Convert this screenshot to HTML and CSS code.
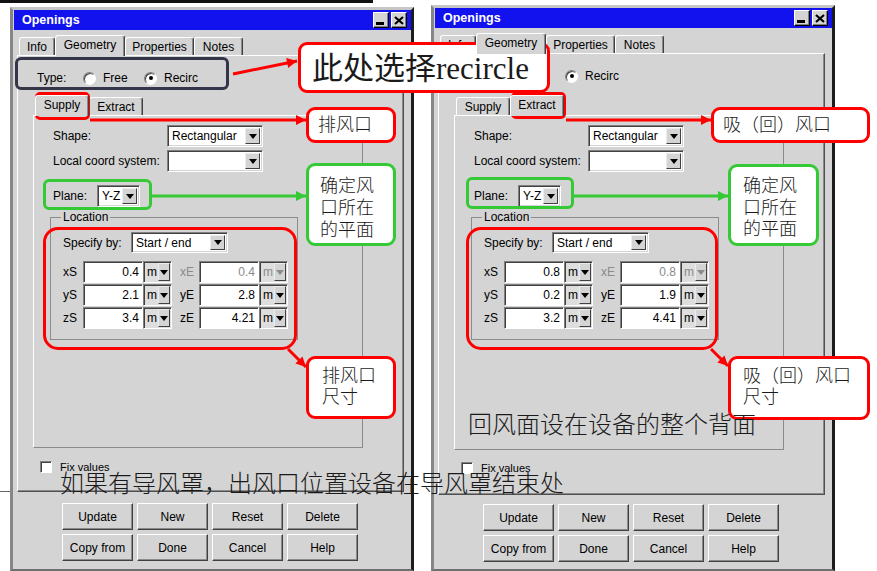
FILE: index.html
```html
<!DOCTYPE html>
<html lang="zh">
<head>
<meta charset="utf-8">
<title>Openings</title>
<link rel="stylesheet" href="styles.css">
</head>
<body>
<div class="desk">
  <div class="topline"></div>
  <div class="stray"></div>

  <section class="win win-a">
    <header class="title"><span>Openings</span><span class="tbtns"><span class="tb tb-min"></span><span class="tb"><svg width="10" height="9" viewBox="0 0 10 9"><path d="M1 1L9 8M9 1L1 8" stroke="#000" stroke-width="2.2"/></svg></span></span></header>
    <nav class="tabs">
      <span class="tab w-info">Info</span><span class="tab on w-geo">Geometry</span><span class="tab w-prop">Properties</span><span class="tab w-notes">Notes</span>
    </nav>
    <div class="panel">
      <div class="typerow"><span class="typelbl">Type:</span><span class="opt"><span class="radio"></span>Free</span><span class="opt"><span class="radio on"></span>Recirc</span></div>
      <nav class="tabs sub"><span class="tab w-sub on">Supply</span><span class="tab w-sub">Extract</span></nav>
      <div class="subpanel">
        <div class="frow"><span class="lbl-w">Shape:</span><span class="combo c-shape"><span class="val">Rectangular</span><span class="drop"></span></span></div>
        <div class="frow"><span class="lbl-w">Local coord system:</span><span class="combo c-shape"><span class="val"></span><span class="drop"></span></span></div>
        <div class="frow plane"><span class="lbl-p">Plane:</span><span class="combo c-plane"><span class="val">Y-Z</span><span class="drop"></span></span></div>
        <fieldset class="loc"><legend>Location</legend>
          <div class="srow"><span class="lbl-s">Specify by:</span><span class="combo c-spec"><span class="val">Start / end</span><span class="drop"></span></span></div>
          <div class="crow first"><span class="cl">xS</span><span class="inp">0.4</span><span class="unit"><span class="u">m</span><span class="drop"></span></span><span class="cl cl2 dis">xE</span><span class="inp dis">0.4</span><span class="unit dis"><span class="u">m</span><span class="drop"></span></span></div>
          <div class="crow"><span class="cl">yS</span><span class="inp">2.1</span><span class="unit"><span class="u">m</span><span class="drop"></span></span><span class="cl cl2">yE</span><span class="inp">2.8</span><span class="unit"><span class="u">m</span><span class="drop"></span></span></div>
          <div class="crow"><span class="cl">zS</span><span class="inp">3.4</span><span class="unit"><span class="u">m</span><span class="drop"></span></span><span class="cl cl2">zE</span><span class="inp">4.21</span><span class="unit"><span class="u">m</span><span class="drop"></span></span></div>
        </fieldset>
      </div>
      <div class="fix"><span class="chk"></span>Fix values</div>
    </div>
    <div class="btns">
      <span class="btn">Update</span><span class="btn">New</span><span class="btn">Reset</span><span class="btn">Delete</span>
      <span class="btn">Copy from</span><span class="btn">Done</span><span class="btn">Cancel</span><span class="btn">Help</span>
    </div>
  </section>

  <section class="win win-b">
    <header class="title"><span>Openings</span><span class="tbtns"><span class="tb tb-min"></span><span class="tb"><svg width="10" height="9" viewBox="0 0 10 9"><path d="M1 1L9 8M9 1L1 8" stroke="#000" stroke-width="2.2"/></svg></span></span></header>
    <nav class="tabs">
      <span class="tab w-info">Info</span><span class="tab on w-geo">Geometry</span><span class="tab w-prop">Properties</span><span class="tab w-notes">Notes</span>
    </nav>
    <div class="panel">
      <div class="typerow"><span class="typelbl">Type:</span><span class="opt"><span class="radio"></span>Free</span><span class="opt"><span class="radio on"></span>Recirc</span></div>
      <nav class="tabs sub"><span class="tab w-sub">Supply</span><span class="tab w-sub on">Extract</span></nav>
      <div class="subpanel">
        <div class="frow"><span class="lbl-w">Shape:</span><span class="combo c-shape"><span class="val">Rectangular</span><span class="drop"></span></span></div>
        <div class="frow"><span class="lbl-w">Local coord system:</span><span class="combo c-shape"><span class="val"></span><span class="drop"></span></span></div>
        <div class="frow plane"><span class="lbl-p">Plane:</span><span class="combo c-plane"><span class="val">Y-Z</span><span class="drop"></span></span></div>
        <fieldset class="loc"><legend>Location</legend>
          <div class="srow"><span class="lbl-s">Specify by:</span><span class="combo c-spec"><span class="val">Start / end</span><span class="drop"></span></span></div>
          <div class="crow first"><span class="cl">xS</span><span class="inp">0.8</span><span class="unit"><span class="u">m</span><span class="drop"></span></span><span class="cl cl2 dis">xE</span><span class="inp dis">0.8</span><span class="unit dis"><span class="u">m</span><span class="drop"></span></span></div>
          <div class="crow"><span class="cl">yS</span><span class="inp">0.2</span><span class="unit"><span class="u">m</span><span class="drop"></span></span><span class="cl cl2">yE</span><span class="inp">1.9</span><span class="unit"><span class="u">m</span><span class="drop"></span></span></div>
          <div class="crow"><span class="cl">zS</span><span class="inp">3.2</span><span class="unit"><span class="u">m</span><span class="drop"></span></span><span class="cl cl2">zE</span><span class="inp">4.41</span><span class="unit"><span class="u">m</span><span class="drop"></span></span></div>
        </fieldset>
      </div>
      <div class="fix"><span class="chk"></span>Fix values</div>
    </div>
    <div class="btns">
      <span class="btn">Update</span><span class="btn">New</span><span class="btn">Reset</span><span class="btn">Delete</span>
      <span class="btn">Copy from</span><span class="btn">Done</span><span class="btn">Cancel</span><span class="btn">Help</span>
    </div>
  </section>

  <div class="mark m-type"></div>
  <div class="mark red m-supply"></div>
  <div class="mark green m-plane"></div>
  <div class="mark red m-loc"></div>
  <div class="mark red m-extract"></div>
  <div class="mark green m-plane2"></div>
  <div class="mark red m-loc2"></div>

  <svg class="arrows" width="877" height="571" viewBox="0 0 877 571">
    <defs>
      <marker id="hr" viewBox="0 0 10 10" refX="10" refY="5" markerWidth="11" markerHeight="10" markerUnits="userSpaceOnUse" orient="auto"><path d="M0 0L10 5L0 10z" fill="#f00"/></marker>
      <marker id="hg" viewBox="0 0 10 10" refX="10" refY="5" markerWidth="11" markerHeight="10" markerUnits="userSpaceOnUse" orient="auto"><path d="M0 0L10 5L0 10z" fill="#36c936"/></marker>
    </defs>
    <g stroke-width="3" fill="none">
      <line x1="233" y1="74" x2="297" y2="61" stroke="#f00" marker-end="url(#hr)"/>
      <line x1="90" y1="120" x2="306" y2="120" stroke="#f00" marker-end="url(#hr)"/>
      <line x1="152" y1="196" x2="306" y2="196" stroke="#36c936" marker-end="url(#hg)"/>
      <line x1="288" y1="349" x2="306" y2="367" stroke="#f00" marker-end="url(#hr)"/>
      <line x1="566" y1="120" x2="711" y2="120" stroke="#f00" marker-end="url(#hr)"/>
      <line x1="574" y1="196" x2="728" y2="196" stroke="#36c936" marker-end="url(#hg)"/>
      <line x1="711" y1="349" x2="728" y2="366" stroke="#f00" marker-end="url(#hr)"/>
    </g>
  </svg>

  <div class="callout c1">此处选择recircle</div>
  <div class="callout c2">排风口</div>
  <div class="callout green c3">确定风<br>口所在<br>的平面</div>
  <div class="callout c4">排风口<br>尺寸</div>
  <div class="callout c5">吸（回）风口</div>
  <div class="callout green c6">确定风<br>口所在<br>的平面</div>
  <div class="callout c7">吸（回）风口<br>尺寸</div>

  <div class="note n1">回风面设在设备的整个背面</div>
  <div class="note n2">如果有导风罩，出风口位置设备在导风罩结束处</div>
</div>
</body>
</html>
```

FILE: styles.css
```css
* { box-sizing: border-box; margin: 0; padding: 0; }
body { margin: 0; background: #fff; font-family: "Liberation Sans", Arial, sans-serif; }

.desk { position: relative; width: 877px; height: 571px; overflow: hidden; background: #fff; }
.topline { position: absolute; left: 0; top: 0; width: 373px; height: 3px; background: #111; }
.stray { position: absolute; left: 0; top: 491px; width: 11px; height: 1px; background: #666; }

/* window */
.win {
  position: absolute; width: 404px; height: 564px;
  background: #d4d4d4; color: #000; font-size: 12px;
  border-style: solid; border-width: 3px 3px 2px 3px;
  border-color: #c6c6c6 #1c1c1c #6e6e6e #868686;
  padding-left: 1px;
}
.win-a { left: 10px; top: 7px; }
.win-b { left: 431px; top: 5px; height: 566px; }

.title {
  height: 20px; background: #1212ee; color: #fff;
  display: flex; align-items: center; justify-content: space-between;
  padding: 0 4px 0 8px; font-weight: bold; font-size: 12.5px;
}
.tbtns { display: flex; gap: 2px; }
.tb {
  width: 16px; height: 16px; background: #d4d4d4;
  border: 1px solid; border-color: #fff #000 #000 #fff;
  box-shadow: inset -1px -1px #808080;
  display: flex; align-items: center; justify-content: center;
}
.tb-min { align-items: flex-end; padding-bottom: 2px; padding-right: 2px; }
.tb-min::after { content: ""; width: 8px; height: 3px; background: #000; }

/* tabs */
.tabs { display: flex; align-items: flex-end; height: 22px; margin-top: 3px; padding-left: 5px; }
.tab {
  height: 18px; background: #d4d4d4;
  border: 1px solid; border-bottom: none;
  border-color: #fff #404040 transparent #fff;
  border-radius: 3px 3px 0 0;
  box-shadow: inset -1px 0 #8a8a8a;
  display: flex; align-items: center; justify-content: center;
  white-space: nowrap;
}
.tab.on { height: 21px; margin-bottom: -1px; position: relative; z-index: 1; padding-bottom: 3px; }
.w-info { width: 36px; }
.w-geo { width: 70px; }
.w-prop { width: 69px; }
.w-notes { width: 49px; }
.w-sub { width: 54px; }
.tabs.sub { height: 23px; margin-left: 17px; padding-left: 0; }
.win-b .tabs.sub { margin-top: 5px; }

.panel {
  margin-left: 3px; width: 387px; height: 437px;
  border: 1px solid; border-color: #fff #505050 #505050 #fff;
  box-shadow: inset -1px -1px #8a8a8a;
}
.win-b .panel { height: 442px; }

.typerow { display: flex; align-items: center; height: 22px; margin-top: 11px; padding-left: 19px; }
.typelbl { width: 46px; }
.opt { display: flex; align-items: center; width: 61px; }
.radio {
  width: 13px; height: 13px; border-radius: 50%; background: #fff;
  border: 1px solid; border-color: #808080 #fff #fff #808080;
  box-shadow: inset 1px 1px #404040;
  margin-right: 7px; display: flex; align-items: center; justify-content: center;
}
.radio.on::after { content: ""; width: 4px; height: 4px; border-radius: 50%; background: #000; }

.subpanel {
  margin-left: 15px; width: 330px; height: 333px;
  border: 1px solid; border-color: #fff #8a8a8a #8a8a8a #fff;
  padding: 9px 0 0 16px;
}
.win-b .subpanel { height: 335px; }

.frow { display: flex; align-items: center; height: 22px; padding-left: 3px; }
.frow + .frow { margin-top: 3px; }
.frow.plane { margin-top: 13px; }
.lbl-w { width: 114px; white-space: nowrap; }
.lbl-p { width: 44px; }
.lbl-s { width: 68px; white-space: nowrap; }

.combo {
  display: flex; height: 22px; background: #fff;
  border: 1px solid; border-color: #808080 #fff #fff #808080;
  box-shadow: inset 1px 1px #404040, inset -1px -1px #d4d4d4;
  padding: 2px;
}
.combo .val { flex: 1; padding-left: 2px; display: flex; align-items: center; white-space: nowrap; overflow: hidden; }
.c-shape { width: 96px; }
.c-plane { width: 43px; }
.c-spec { width: 97px; }

.drop {
  width: 15px; background: #d4d4d4;
  border: 1px solid; border-color: #ececec #404040 #404040 #ececec;
  display: flex; align-items: center; justify-content: center;
}
.drop::after { content: ""; border-left: 4px solid transparent; border-right: 4px solid transparent; border-top: 5px solid #000; }

.loc {
  margin-top: 3px; width: 248px; min-width: 0;
  border: 1px solid #8c8c8c;
  padding: 0 0 10px 12px;
}
.loc legend { margin-left: -2px; padding: 0 2px; line-height: 14px; font-size: 12px; }
.srow { display: flex; align-items: center; height: 21px; margin-top: 8px; }
.srow .combo { height: 21px; }
.crow { display: flex; align-items: center; height: 22px; }
.crow + .crow { margin-top: 1px; }
.crow.first { margin-top: 8px; }
.cl { width: 20px; }
.cl2 { width: 19px; margin-left: 8px; }
.inp {
  width: 60px; height: 22px; background: #fff;
  border: 1px solid; border-color: #808080 #fff #fff #808080;
  box-shadow: inset 1px 1px #404040;
  display: flex; align-items: center; justify-content: flex-end; padding-right: 3px;
}
.unit {
  width: 29px; height: 22px; display: flex; background: #dedede;
  border: 1px solid; border-color: #808080 #fff #fff #808080;
  box-shadow: inset 1px 1px #404040;
  padding: 1px;
}
.unit .u { flex: 1; display: flex; align-items: center; padding-left: 2px; }
.unit .drop { width: 12px; }
.dis { color: #8a8a8a; }
.unit.dis .drop::after { border-top-color: #8a8a8a; }

.fix { display: flex; align-items: center; height: 12px; margin-top: 13px; padding-left: 22px; font-size: 11px; }
.win-b .fix { margin-top: 12px; }
.chk {
  width: 12px; height: 12px; background: #fff; margin-right: 8px;
  border: 1px solid; border-color: #808080 #fff #fff #808080;
  box-shadow: inset 1px 1px #404040;
}

.btns {
  display: grid; grid-template-columns: repeat(4, 71px); grid-auto-rows: 27px;
  column-gap: 4px; row-gap: 4px; margin-top: 11px; padding-left: 48px;
}
.win-b .btns { margin-top: 9px; }
.btn {
  display: flex; align-items: center; justify-content: center;
  background: #d4d4d4; font-size: 12px;
  border: 1px solid; border-color: #fff #404040 #404040 #fff;
  box-shadow: inset -1px -1px #8a8a8a;
}

/* annotation marks */
.mark { position: absolute; border: 3px solid #35354a; border-radius: 6px; }
.mark.red { border-color: #f00; }
.mark.green { border-color: #36c936; }
.m-type { left: 15px; top: 57px; width: 214px; height: 33px; }
.m-supply { left: 35px; top: 92px; width: 55px; height: 28px; border-radius: 5px; }
.m-plane { left: 43px; top: 179px; width: 109px; height: 31px; }
.m-loc { left: 43px; top: 227px; width: 254px; height: 123px; border-radius: 15px; }
.m-extract { left: 511px; top: 92px; width: 55px; height: 27px; border-radius: 5px; }
.m-plane2 { left: 466px; top: 177px; width: 108px; height: 32px; }
.m-loc2 { left: 466px; top: 227px; width: 252px; height: 123px; border-radius: 15px; }

.arrows { position: absolute; left: 0; top: 0; }

.callout {
  position: absolute; background: #fff;
  border: 3px solid #f00; border-radius: 9px;
  font-family: "Liberation Serif", "Noto Sans CJK SC", serif;
  font-size: 18px; line-height: 22px; color: #1a1a1a; white-space: nowrap;
  font-weight: 300;
}
.callout.green { border-color: #36c936; }
.c1 { left: 298px; top: 42px; width: 252px; height: 51px; font-size: 31px; line-height: 40px; padding: 2px 0 0 11px; display: flex; align-items: center; font-weight: 400; }
.c2 { left: 306px; top: 107px; width: 90px; height: 36px; padding-left: 9px; display: flex; align-items: center; }
.c3 { left: 306px; top: 163px; width: 90px; height: 83px; padding: 9px 0 0 11px; }
.c4 { left: 306px; top: 356px; width: 90px; height: 63px; padding: 7px 0 0 13px; line-height: 21px; }
.c5 { left: 711px; top: 107px; width: 159px; height: 36px; padding-left: 9px; display: flex; align-items: center; }
.c6 { left: 728px; top: 164px; width: 91px; height: 82px; padding: 9px 0 0 12px; line-height: 21.5px; }
.c7 { left: 728px; top: 356px; width: 142px; height: 64px; padding: 7px 0 0 12px; line-height: 21px; }

.note {
  position: absolute; font-family: "Noto Sans CJK SC", sans-serif;
  font-size: 24px; line-height: 24px; color: #1a1a1a; white-space: nowrap;
  font-weight: 300;
}
.n1 { left: 468px; top: 411px; }
.n2 { left: 60px; top: 470px; }
```
